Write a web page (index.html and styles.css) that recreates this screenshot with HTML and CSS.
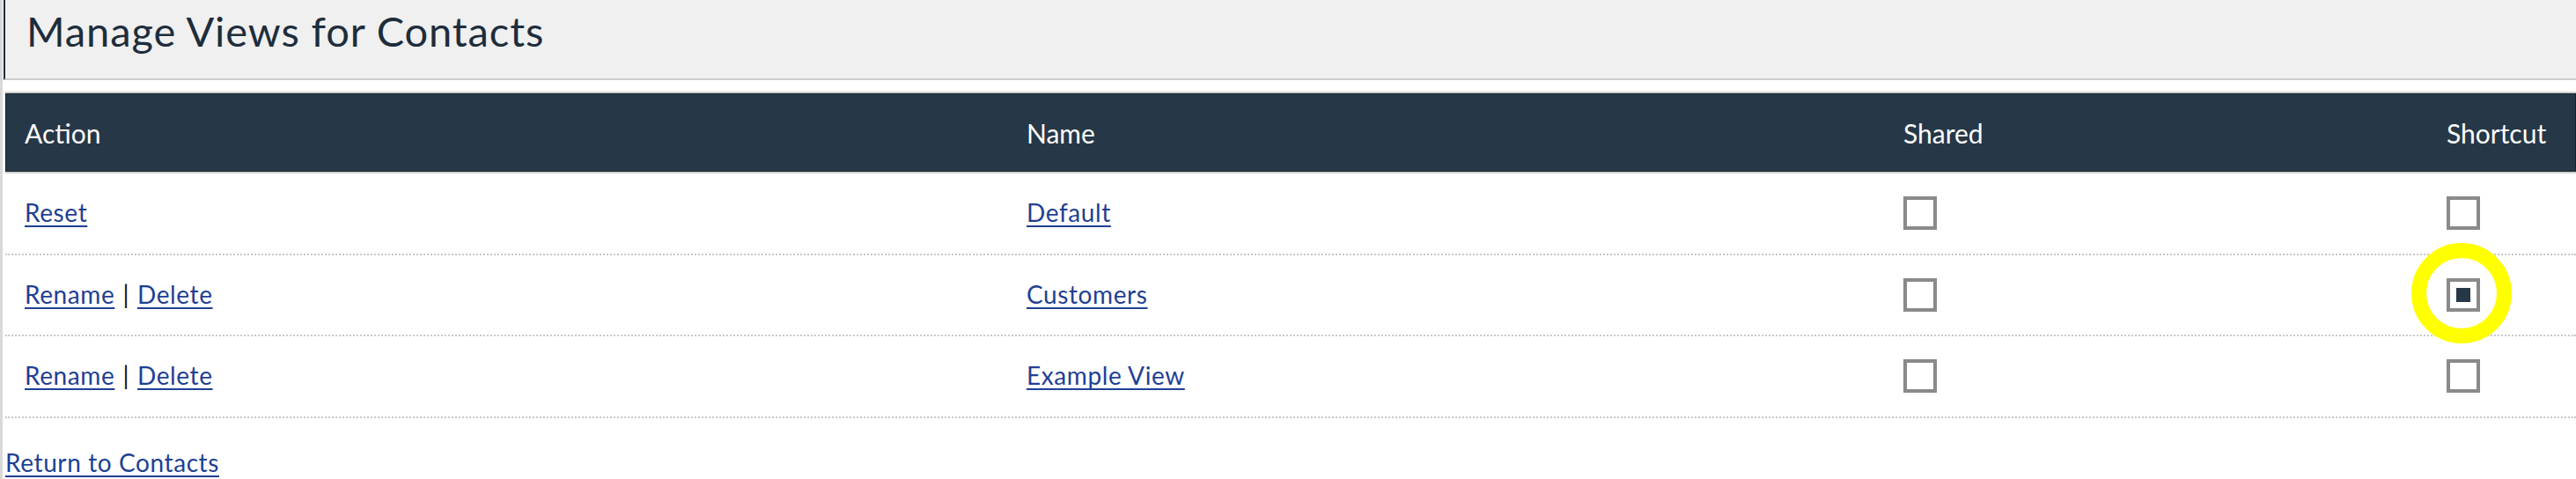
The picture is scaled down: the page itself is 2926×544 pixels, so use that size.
FILE: index.html
```html
<!DOCTYPE html>
<html lang="en">
<head>
<meta charset="utf-8">
<title>Manage Views for Contacts</title>
<link rel="stylesheet" href="styles.css">
</head>
<body>
<div class="page">
  <header class="page-header">
    <h1 class="page-title">Manage Views for Contacts</h1>
  </header>

  <div class="views">
    <div class="views-row views-head">
      <div class="cell">Action</div>
      <div class="cell">Name</div>
      <div class="cell">Shared</div>
      <div class="cell">Shortcut</div>
    </div>

    <div class="views-row">
      <div class="cell"><a href="#">Reset</a></div>
      <div class="cell"><a href="#">Default</a></div>
      <div class="cell"><span class="check"></span></div>
      <div class="cell"><span class="check"></span></div>
    </div>

    <div class="views-row">
      <div class="cell"><a href="#">Rename</a><span class="sep">|</span><a href="#">Delete</a></div>
      <div class="cell"><a href="#">Customers</a></div>
      <div class="cell"><span class="check"></span></div>
      <div class="cell"><span class="check is-checked"><span class="highlight"></span></span></div>
    </div>

    <div class="views-row">
      <div class="cell"><a href="#">Rename</a><span class="sep">|</span><a href="#">Delete</a></div>
      <div class="cell"><a href="#">Example View</a></div>
      <div class="cell"><span class="check"></span></div>
      <div class="cell"><span class="check"></span></div>
    </div>
  </div>

  <a class="return-link" href="#">Return to Contacts</a>
</div>
</body>
</html>
```

FILE: styles.css
```css
html, body {
  margin: 0;
  padding: 0;
  background: #ffffff;
}

body {
  font-family: "Lato", "Open Sans", sans-serif;
  color: #1d2d3c;
  overflow: hidden;
}

.page {
  min-height: 544px;
  border-left: 3px solid #d9d9d9;
  box-sizing: border-box;
}

.page-header {
  margin-left: 1px;
  height: 89px;
  background: #f0f0f0;
  border-left: 2px solid #1d2d3c;
  border-bottom: 2px solid #cdcdcd;
  box-sizing: content-box;
}

.page-title {
  margin: 0;
  padding: 7px 0 0 24px;
  font-size: 47px;
  line-height: 1.2;
  font-weight: 400;
  letter-spacing: 0.9px;
  color: #1d2d3c;
}

.views {
  margin: 13px 0 0 3px;
}

.views-row {
  display: grid;
  grid-template-columns: 1138px 996px 617px 1fr;
  height: 90.5px;
  border-bottom: 2px dotted #c8c8c8;
}

.views-head {
  height: 89px;
  background: #263847;
  border-top: 2px solid #cfcfcf;
  border-bottom: 2px solid #cfcfcf;
  box-shadow: inset 0 0 0 1px #16212c;
  color: #ffffff;
}

.cell {
  display: flex;
  align-items: center;
  padding-left: 22px;
  font-size: 28px;
  line-height: 1.2;
  letter-spacing: 0.6px;
  color: #111111;
}

.views-head .cell {
  font-size: 30px;
  letter-spacing: 0;
  color: #ffffff;
}

.cell a,
.return-link {
  color: #1f3f93;
  text-decoration: underline;
  text-decoration-thickness: 2px;
  text-underline-offset: 4px;
}

.sep {
  margin: 0 9px;
  color: #111111;
}

.check {
  position: relative;
  display: block;
  width: 38px;
  height: 38px;
  box-sizing: border-box;
  border: 4px solid #8a8a8a;
  background: #ffffff;
}

.check.is-checked::after {
  content: "";
  position: absolute;
  left: 7px;
  top: 7px;
  width: 16px;
  height: 16px;
  background: #263847;
}

.highlight {
  position: absolute;
  left: -44px;
  top: -44px;
  width: 114px;
  height: 114px;
  box-sizing: border-box;
  border: 17px solid #ffff00;
  border-radius: 50%;
  z-index: 2;
}

.return-link {
  display: inline-block;
  margin: 34px 0 0 3px;
  font-size: 28px;
  line-height: 1.2;
  letter-spacing: 0.6px;
}
```
